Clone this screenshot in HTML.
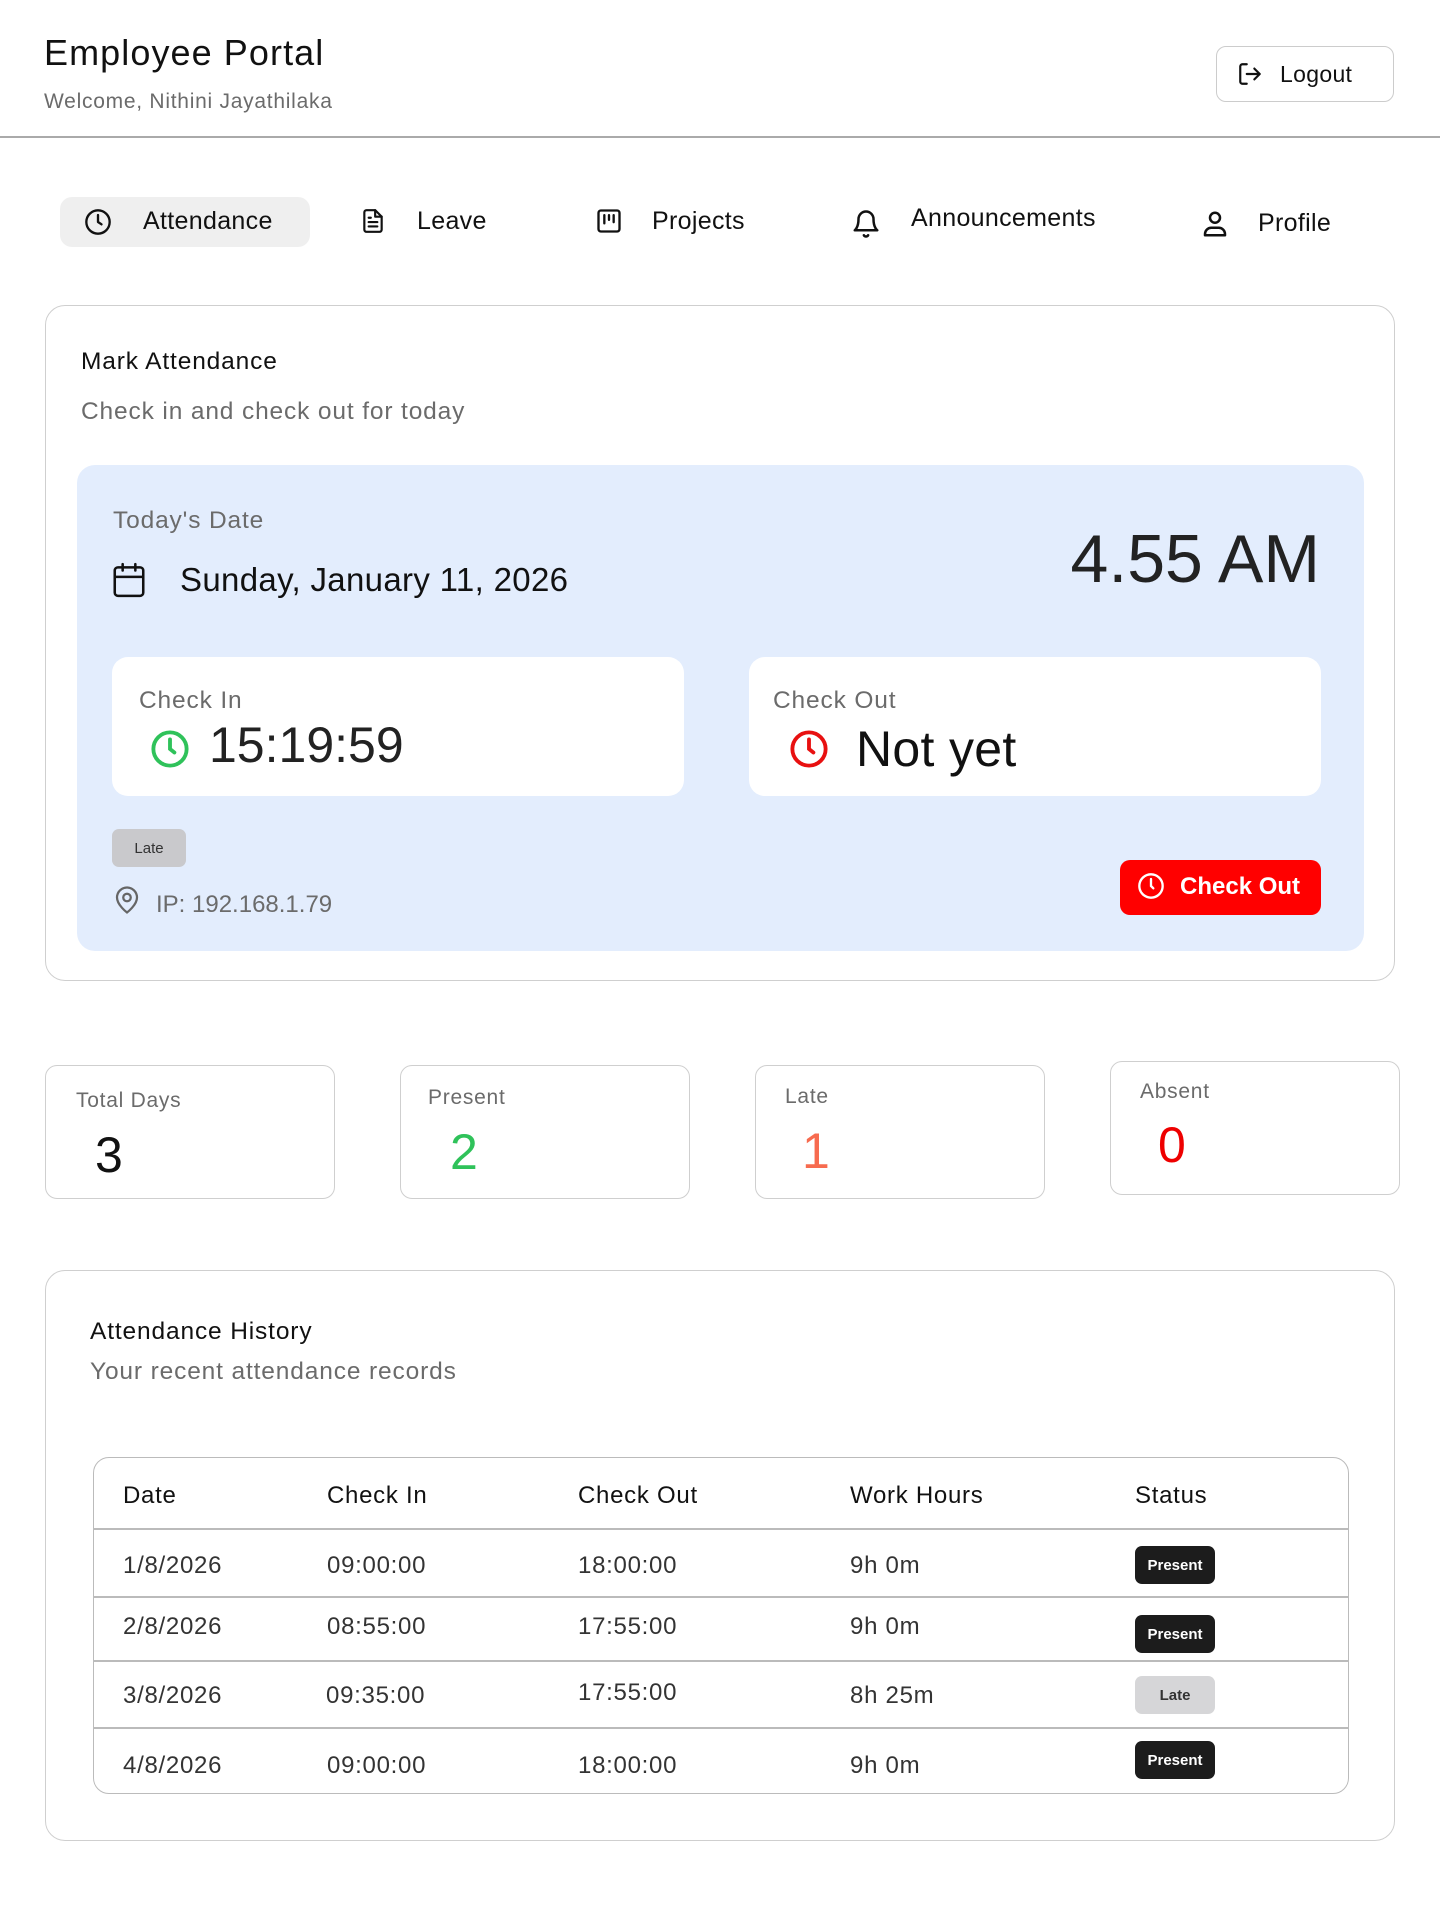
<!DOCTYPE html>
<html><head><meta charset="utf-8"><style>
*{box-sizing:border-box;margin:0;padding:0}
body{width:1440px;height:1928px;background:#fff;font-family:"Liberation Sans",sans-serif;color:#111;position:relative;overflow:hidden;letter-spacing:0.02em}
.a{position:absolute;white-space:nowrap}
.w{letter-spacing:0.035em;font-size:24.5px!important}
.card{position:absolute;border:1.5px solid #cfcfcf;border-radius:20px;background:#fff}
.gray{color:#6b6b6b}
svg{position:absolute}
.ic{fill:none;stroke:#111;stroke-width:2;stroke-linecap:round;stroke-linejoin:round}
.badge{position:absolute;border-radius:7px;font-size:15px;font-weight:bold;display:flex;align-items:center;justify-content:center;letter-spacing:0}
.blk{background:#1c1c1c;color:#fff}
.lt{background:#d6d6d8;color:#333}
.td{font-size:24px;color:#333;letter-spacing:0.03em}
.th{font-size:24px;color:#111;letter-spacing:0.03em}
.s{letter-spacing:0.035em;font-size:21px}
</style></head><body>
<div class="a" style="left:44px;top:32px;font-size:36px;letter-spacing:0.03em">Employee Portal</div>
<div class="a gray s" style="left:44px;top:90px">Welcome, Nithini Jayathilaka</div>
<div class="a" style="left:1216px;top:46px;width:178px;height:56px;border:1.5px solid #ccc;border-radius:10px"></div>
<svg style="left:1237px;top:61px" width="26" height="26" viewBox="0 0 24 24"><path class="ic" d="M9 21H5a2 2 0 0 1-2-2V5a2 2 0 0 1 2-2h4M16 17l5-5-5-5M21 12H9"/></svg>
<div class="a" style="left:1280px;top:61px;font-size:23px">Logout</div>
<div class="a" style="left:0;top:136px;width:1440px;height:2px;background:#aaa"></div>

<div class="a" style="left:60px;top:197px;width:250px;height:50px;background:#efefef;border-radius:12px"></div>
<svg style="left:84px;top:208px" width="28" height="28" viewBox="0 0 24 24"><circle class="ic" cx="12" cy="12" r="10"/><path class="ic" d="M12 6v6l3 2"/></svg>
<div class="a" style="left:143px;top:207px;font-size:25px">Attendance</div>
<svg style="left:360px;top:207px" width="26" height="28" viewBox="0 0 24 24"><path class="ic" d="M14 2H6a2 2 0 0 0-2 2v16a2 2 0 0 0 2 2h12a2 2 0 0 0 2-2V8z"/><path class="ic" d="M14 2v6h6M16 13H8M16 17H8M10 9H8"/></svg>
<div class="a" style="left:417px;top:207px;font-size:25px">Leave</div>
<svg style="left:595px;top:207px" width="28" height="28" viewBox="0 0 24 24"><rect class="ic" x="3" y="3" width="18" height="18" rx="2"/><path class="ic" d="M8 7v7M12 7v4M16 7v6"/></svg>
<div class="a" style="left:652px;top:207px;font-size:25px">Projects</div>
<svg style="left:851px;top:209px" width="30" height="30" viewBox="0 0 24 24"><path class="ic" d="M6 8a6 6 0 0 1 12 0c0 7 3 9 3 9H3s3-2 3-9M10.3 21a1.94 1.94 0 0 0 3.4 0"/></svg>
<div class="a" style="left:911px;top:204px;font-size:25px">Announcements</div>
<svg style="left:1200px;top:208px" width="30" height="32" viewBox="0 0 24 24"><circle class="ic" cx="12" cy="7" r="4"/><path class="ic" d="M4 21v-1a5 5 0 0 1 5-5h6a5 5 0 0 1 5 5v1z"/></svg>
<div class="a" style="left:1258px;top:209px;font-size:25px">Profile</div>

<div class="card" style="left:45px;top:305px;width:1350px;height:676px"></div>
<div class="a w" style="left:81px;top:348px">Mark Attendance</div>
<div class="a gray w" style="left:81px;top:398px">Check in and check out for today</div>
<div class="a" style="left:77px;top:465px;width:1287px;height:486px;background:#e3edfd;border-radius:18px"></div>
<div class="a gray w" style="left:113px;top:507px">Today's Date</div>
<svg style="left:110px;top:561px" width="38" height="38" viewBox="0 0 24 24"><rect class="ic" x="3" y="4" width="18" height="18" rx="2" style="stroke-width:1.6"/><path class="ic" d="M16 2v4M8 2v4M3 10h18" style="stroke-width:1.6"/></svg>
<div class="a" style="left:180px;top:561px;font-size:33px;letter-spacing:0.01em">Sunday, January 11, 2026</div>
<div class="a" style="right:120px;top:520px;font-size:68px;color:#222;letter-spacing:0">4.55 AM</div>

<div class="a" style="left:112px;top:657px;width:572px;height:139px;background:#fff;border-radius:16px"></div>
<div class="a gray w" style="left:139px;top:687px">Check In</div>
<svg style="left:149px;top:728px" width="42" height="42" viewBox="0 0 24 24"><circle cx="12" cy="12" r="9.5" fill="none" stroke="#2fc25a" stroke-width="2.2"/><path d="M12 6.5v5.5l2.5 2" fill="none" stroke="#2fc25a" stroke-width="2.2" stroke-linecap="round"/></svg>
<div class="a" style="left:209px;top:716px;font-size:50px;color:#222;letter-spacing:0">15:19:59</div>
<div class="a" style="left:749px;top:657px;width:572px;height:139px;background:#fff;border-radius:16px"></div>
<div class="a gray w" style="left:773px;top:687px">Check Out</div>
<svg style="left:788px;top:728px" width="42" height="42" viewBox="0 0 24 24"><circle cx="12" cy="12" r="9.5" fill="none" stroke="#e81010" stroke-width="2.2"/><path d="M12 6.5v5.5l2.5 2" fill="none" stroke="#e81010" stroke-width="2.2" stroke-linecap="round"/></svg>
<div class="a" style="left:856px;top:720px;font-size:50px;color:#111">Not yet</div>

<div class="badge lt" style="left:112px;top:829px;width:74px;height:38px;font-weight:normal;background:#c9c9cc">Late</div>
<svg style="left:112px;top:885px" width="30" height="30" viewBox="0 0 24 24"><path d="M20 10c0 6-8 12-8 12s-8-6-8-12a8 8 0 0 1 16 0z" fill="none" stroke="#666" stroke-width="1.8"/><circle cx="12" cy="10" r="3" fill="none" stroke="#666" stroke-width="1.8"/></svg>
<div class="a gray" style="left:156px;top:891px;font-size:24px;letter-spacing:0">IP: 192.168.1.79</div>
<div class="a" style="left:1120px;top:860px;width:201px;height:55px;background:#ff0000;border-radius:10px"></div>
<svg style="left:1137px;top:872px" width="28" height="28" viewBox="0 0 24 24"><circle cx="12" cy="12" r="10" fill="none" stroke="#fff" stroke-width="2"/><path d="M12 6v6l2 2" fill="none" stroke="#fff" stroke-width="2" stroke-linecap="round"/></svg>
<div class="a" style="left:1180px;top:873px;font-size:24px;color:#fff;font-weight:bold;letter-spacing:0">Check Out</div>

<div class="card" style="left:45px;top:1065px;width:290px;height:134px;border-radius:12px"></div>
<div class="a gray s" style="left:76px;top:1089px">Total Days</div>
<div class="a" style="left:95px;top:1126px;font-size:50px;color:#111">3</div>
<div class="card" style="left:400px;top:1065px;width:290px;height:134px;border-radius:12px"></div>
<div class="a gray s" style="left:428px;top:1086px">Present</div>
<div class="a" style="left:450px;top:1123px;font-size:50px;color:#2fc25a">2</div>
<div class="card" style="left:755px;top:1065px;width:290px;height:134px;border-radius:12px"></div>
<div class="a gray s" style="left:785px;top:1085px">Late</div>
<div class="a" style="left:802px;top:1122px;font-size:50px;color:#f76b4f">1</div>
<div class="card" style="left:1110px;top:1061px;width:290px;height:134px;border-radius:12px"></div>
<div class="a gray s" style="left:1140px;top:1080px">Absent</div>
<div class="a" style="left:1158px;top:1116px;font-size:50px;color:#ee0000">0</div>

<div class="card" style="left:45px;top:1270px;width:1350px;height:571px"></div>
<div class="a w" style="left:90px;top:1318px">Attendance History</div>
<div class="a gray w" style="left:90px;top:1358px">Your recent attendance records</div>
<div class="a" style="left:93px;top:1457px;width:1256px;height:337px;border:1.5px solid #bbb;border-radius:16px"></div>
<div class="a" style="left:94px;top:1528px;width:1254px;height:1.5px;background:#bbb"></div>
<div class="a" style="left:94px;top:1596px;width:1254px;height:1.5px;background:#bbb"></div>
<div class="a" style="left:94px;top:1660px;width:1254px;height:1.5px;background:#bbb"></div>
<div class="a" style="left:94px;top:1727px;width:1254px;height:1.5px;background:#bbb"></div>
<div class="a th" style="left:123px;top:1482px">Date</div>
<div class="a th" style="left:327px;top:1482px">Check In</div>
<div class="a th" style="left:578px;top:1482px">Check Out</div>
<div class="a th" style="left:850px;top:1482px">Work Hours</div>
<div class="a th" style="left:1135px;top:1482px">Status</div>

<div class="a td" style="left:123px;top:1552px">1/8/2026</div><div class="a td" style="left:327px;top:1552px">09:00:00</div><div class="a td" style="left:578px;top:1552px">18:00:00</div><div class="a td" style="left:850px;top:1552px">9h 0m</div>
<div class="badge blk" style="left:1135px;top:1546px;width:80px;height:38px">Present</div>
<div class="a td" style="left:123px;top:1613px">2/8/2026</div><div class="a td" style="left:327px;top:1613px">08:55:00</div><div class="a td" style="left:578px;top:1613px">17:55:00</div><div class="a td" style="left:850px;top:1613px">9h 0m</div>
<div class="badge blk" style="left:1135px;top:1615px;width:80px;height:38px">Present</div>
<div class="a td" style="left:123px;top:1682px">3/8/2026</div><div class="a td" style="left:326px;top:1682px">09:35:00</div><div class="a td" style="left:578px;top:1679px">17:55:00</div><div class="a td" style="left:850px;top:1682px">8h 25m</div>
<div class="badge lt" style="left:1135px;top:1676px;width:80px;height:38px">Late</div>
<div class="a td" style="left:123px;top:1752px">4/8/2026</div><div class="a td" style="left:327px;top:1752px">09:00:00</div><div class="a td" style="left:578px;top:1752px">18:00:00</div><div class="a td" style="left:850px;top:1752px">9h 0m</div>
<div class="badge blk" style="left:1135px;top:1741px;width:80px;height:38px">Present</div>
</body></html>
